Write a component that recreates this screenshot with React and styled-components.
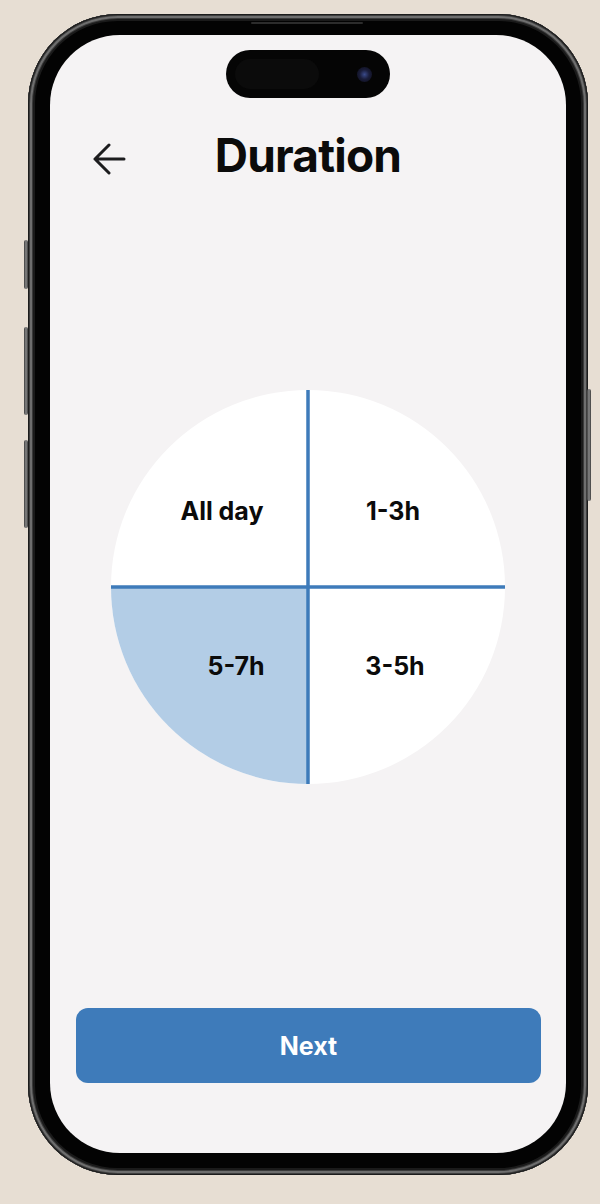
import React from "react";
import styled, { createGlobalStyle } from "styled-components";

const GlobalStyle = createGlobalStyle`
  html, body {
    margin: 0;
    padding: 0;
    background: #e7ded3;
  }
  body {
    font-family: Inter, "Noto Sans", sans-serif;
  }
`;

const Page = styled.div`
  width: 600px;
  height: 1204px;
  padding: 14px 0 0 28px;
  box-sizing: border-box;
  background: #e7ded3;
`;

const Phone = styled.div`
  position: relative;
  width: 560px;
  height: 1161px;
  box-sizing: border-box;
  padding: 21px 22px 22px 22px;
  border-radius: 90px;
  background: #030303;
  box-shadow:
    inset 0 0 0 1px #1c1c1c,
    inset 0 0 0 2px #3e3e3e,
    inset 0 0 0 4px #6e6e6e,
    inset 0 0 0 5px #3a3a3a,
    inset 0 0 0 7px #1a1a1a;
`;

const Speaker = styled.div`
  position: absolute;
  top: 8px;
  left: 223px;
  width: 112px;
  height: 2px;
  border-radius: 1px;
  background: #2c2c2c;
`;

const SideKey = styled.div`
  position: absolute;
  top: ${(p) => p.top}px;
  height: ${(p) => p.h}px;
  width: 4px;
  ${(p) => (p.right ? "right: -3px;" : "left: -4px;")}
  border-radius: 2px;
  background: linear-gradient(90deg, #3c3c3c, #8a8a8a 50%, #3c3c3c);
`;

const Screen = styled.div`
  position: relative;
  height: 100%;
  display: flex;
  flex-direction: column;
  background: #f5f3f4;
  border-radius: 70px;
  overflow: hidden;
`;

const Island = styled.div`
  position: absolute;
  top: 15px;
  left: 176px;
  width: 164px;
  height: 48px;
  border-radius: 24px;
  background: #050505;
  display: flex;
  align-items: center;
  justify-content: space-between;
  padding: 0 18px 0 9px;
  box-sizing: border-box;
`;

const Sensor = styled.div`
  width: 84px;
  height: 30px;
  border-radius: 15px;
  background: #0b0b0b;
`;

const Lens = styled.div`
  width: 15px;
  height: 15px;
  border-radius: 50%;
  background: radial-gradient(circle, #3a4a8a 0%, #1a1d3a 45%, #0b0b16 100%);
`;

const Header = styled.div`
  display: grid;
  grid-template-columns: 1fr auto 1fr;
  align-items: center;
  margin-top: 94px;
  height: 52px;
`;

const BackButton = styled.button`
  justify-self: start;
  margin-left: 42px;
  margin-top: 8px;
  padding: 0;
  border: none;
  background: none;
  display: flex;
  cursor: pointer;
`;

const Title = styled.h1`
  margin: 0;
  font-family: Inter, "Noto Sans", sans-serif;
  font-size: 46px;
  font-weight: 700;
  letter-spacing: -0.8px;
  line-height: 52px;
  color: #0b0b0b;
`;

const ChartWrap = styled.div`
  display: flex;
  justify-content: center;
  margin-top: 206px;
`;

const Label = styled.text`
  font-family: Inter, "Noto Sans", sans-serif;
  font-size: 25px;
  font-weight: 700;
  fill: #0b0b0b;
`;

const NextButton = styled.button`
  margin: auto 25px 70px 26px;
  height: 75px;
  border: none;
  border-radius: 12px;
  background: #3e7bba;
  color: #ffffff;
  font-family: Inter, "Noto Sans", sans-serif;
  font-size: 25px;
  font-weight: 700;
  cursor: pointer;
`;

const slices = [
  { label: "All day", x: 114, y: 133 },
  { label: "1-3h", x: 285, y: 133 },
  { label: "5-7h", x: 128, y: 288 },
  { label: "3-5h", x: 287, y: 288 },
];

const Arrow = () => (
  <svg width="34" height="32" viewBox="0 0 34 32" fill="none">
    <path
      d="M32 16 H3 M17 2 L3 16 L17 30"
      stroke="#1c1c1e"
      strokeWidth="3"
      strokeLinecap="round"
      strokeLinejoin="round"
    />
  </svg>
);

const DurationPie = () => (
  <svg width="400" height="400" viewBox="0 0 400 400">
    <circle cx="200" cy="200" r="197" fill="#ffffff" />
    <path d="M200 200 L3 200 A197 197 0 0 0 200 397 Z" fill="#b3cde6" />
    <line x1="200" y1="3" x2="200" y2="397" stroke="#3e7bba" strokeWidth="3.5" />
    <line x1="3" y1="200" x2="397" y2="200" stroke="#3e7bba" strokeWidth="3.5" />
    {slices.map((s) => (
      <Label key={s.label} x={s.x} y={s.y} textAnchor="middle">
        {s.label}
      </Label>
    ))}
  </svg>
);

export default function App() {
  return (
    <>
      <GlobalStyle />
      <Page>
        <Phone>
          <Speaker />
          <SideKey top={226} h={49} />
          <SideKey top={313} h={88} />
          <SideKey top={426} h={88} />
          <SideKey right top={375} h={112} />
          <Screen>
            <Island>
              <Sensor />
              <Lens />
            </Island>
            <Header>
              <BackButton aria-label="Back">
                <Arrow />
              </BackButton>
              <Title>Duration</Title>
              <span />
            </Header>
            <ChartWrap>
              <DurationPie />
            </ChartWrap>
            <NextButton>Next</NextButton>
          </Screen>
        </Phone>
      </Page>
    </>
  );
}
